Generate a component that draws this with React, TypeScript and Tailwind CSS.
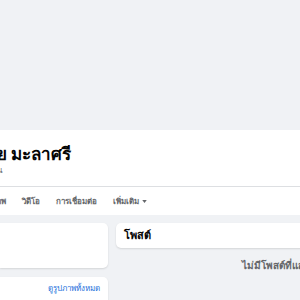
import React from 'react';

export default function App() {
  const font = { fontFamily: '"Noto Sans", "Liberation Sans", sans-serif' };
  return (
    <div className="w-[300px] h-[300px] overflow-hidden bg-[#f0f2f5]" style={font}>
      {/* Cover area */}
      <div className="h-[130px] bg-[#f0f2f5]" />

      {/* Profile header */}
      <div className="h-[85px] bg-white flex flex-col">
        <div className="h-[56px] pt-[13px] overflow-hidden">
          <h1 className="-ml-[15px] whitespace-nowrap text-[17px] leading-[21px] font-bold text-[#050505]">ชัย มะลาศรี</h1>
          <p className="-ml-[27px] whitespace-nowrap text-[8px] leading-[11px] text-[#65676b]">12 เพื่อน</p>
        </div>
        <div className="border-t border-[#dddfe2] flex-1 flex items-center overflow-hidden">
          <div className="flex items-center gap-[16px] whitespace-nowrap text-[8px] font-semibold text-[#65676b] -ml-[17px]">
            <span>รูปภาพ</span>
            <span>วิดีโอ</span>
            <span>การเชื่อมต่อ</span>
            <span className="flex items-center gap-[3px]">
              เพิ่มเติม
              <svg width="5" height="3" viewBox="0 0 6 4" fill="#65676b">
                <path d="M0 0h6L3 4z" />
              </svg>
            </span>
          </div>
        </div>
      </div>

      {/* Body */}
      <div className="flex gap-[8px] pt-[8px]">
        <div className="w-[108px] shrink-0 flex flex-col gap-[9px]">
          <div className="h-[45px] bg-white rounded-r-[5px] shadow-[0_1px_2px_rgba(0,0,0,0.12)]" />
          <div className="h-[40px] bg-white rounded-r-[5px] shadow-[0_1px_2px_rgba(0,0,0,0.12)] flex justify-end pr-[8px] pt-[5px]">
            <a className="text-[8px] leading-[12px] text-[#216fdb] whitespace-nowrap">ดูรูปภาพทั้งหมด</a>
          </div>
        </div>
        <div className="flex-1 flex flex-col">
          <div className="h-[25px] bg-white rounded-l-[5px] shadow-[0_1px_2px_rgba(0,0,0,0.12)] flex items-center pl-[8px]">
            <span className="text-[11px] font-bold text-[#050505]">โพสต์</span>
          </div>
          <div className="pt-[10px] pl-[126px] whitespace-nowrap text-[10px] font-bold text-[#65676b]">
            ไม่มีโพสต์ที่แสดง
          </div>
        </div>
      </div>
    </div>
  );
}
